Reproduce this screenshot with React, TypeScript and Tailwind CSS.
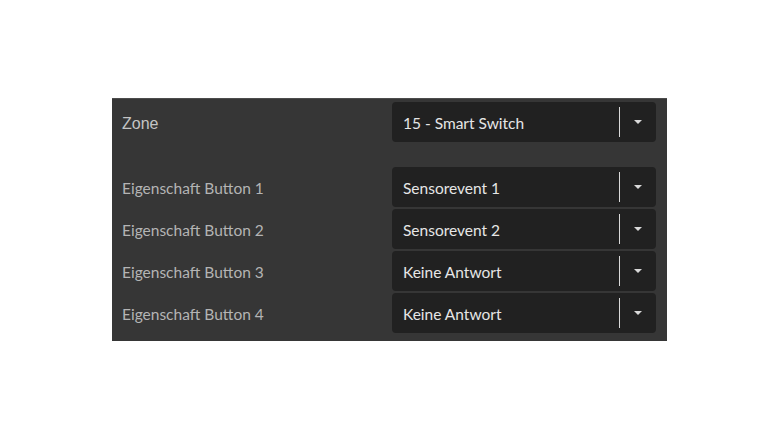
import React from "react";

function Select({ value }: { value: string }) {
  return (
    <div className="w-[264px] h-[40px] bg-[#212121] rounded-[4px] flex items-center">
      <div className="flex-1 pl-[11px] pt-[3px] text-[15.5px] text-[#e6e6e6] font-['Lato',sans-serif] leading-none">{value}</div>
      <div className="w-px h-[30px] bg-[#d9d9d9]" />
      <div className="w-[36px] flex items-center justify-center">
        <svg width="8" height="4" viewBox="0 0 8 4"><path d="M0 0h8L4 4z" fill="#d9d9d9" /></svg>
      </div>
    </div>
  );
}

function Row({ label, value, arial }: { label: string; value: string; arial?: boolean }) {
  return (
    <div className="flex items-center h-[40px]">
      <div
        className={
          arial
            ? "flex-1 pl-[10px] pt-[3px] text-[16px] text-[#c4c4c4] font-['Liberation_Sans',sans-serif]"
            : "flex-1 pl-[10px] pt-[4px] text-[15.5px] text-[#b4b4b4] font-['Lato',sans-serif]"
        }
      >
        {label}
      </div>
      <Select value={value} />
    </div>
  );
}

export default function App() {
  return (
    <div className="w-[780px] h-[440px] bg-white pt-[98px] pl-[112px]">
      <div className="w-[555px] bg-[#363636] border-t border-[#4c4c4c] pt-[3px] pr-[11px] pb-[8px] flex flex-col">
        <Row label="Zone" value="15 - Smart Switch" arial />
        <div className="h-[25px]" />
        <div className="flex flex-col gap-[2px]">
          <Row label="Eigenschaft Button 1" value="Sensorevent 1" />
          <Row label="Eigenschaft Button 2" value="Sensorevent 2" />
          <Row label="Eigenschaft Button 3" value="Keine Antwort" />
          <Row label="Eigenschaft Button 4" value="Keine Antwort" />
        </div>
      </div>
    </div>
  );
}
